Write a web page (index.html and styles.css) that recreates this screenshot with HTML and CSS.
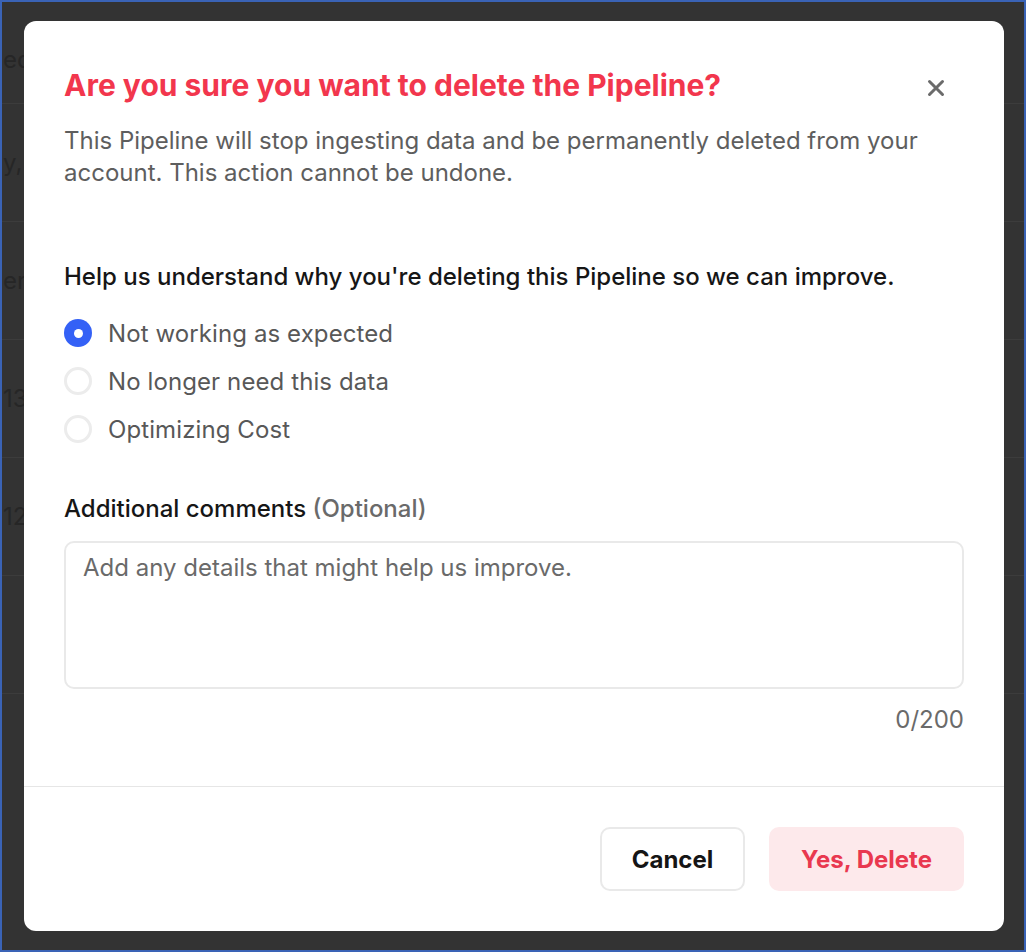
FILE: index.html
```html
<!DOCTYPE html>
<html lang="en">
<head>
<meta charset="utf-8">
<title>Delete Pipeline</title>
<link rel="stylesheet" href="styles.css">
</head>
<body>
<div class="page">
  <div class="row row-head"><span class="cell">ed</span></div>
  <div class="row"><span class="cell">y,</span></div>
  <div class="row"><span class="cell">ero</span></div>
  <div class="row"><span class="cell">13</span></div>
  <div class="row"><span class="cell">12</span></div>
  <div class="row"><span class="cell"></span></div>
</div>
<div class="overlay">
  <div class="modal" role="dialog">
    <div class="modal-body">
      <div class="modal-header">
        <h1 class="title">Are you sure you want to delete the Pipeline?</h1>
        <button class="close" aria-label="Close">
          <svg width="18" height="18" viewBox="0 0 18 18"><path d="M2.5 2.5 L15.5 15.5 M15.5 2.5 L2.5 15.5" stroke="#6b6b6b" stroke-width="3" stroke-linecap="round" fill="none"/></svg>
        </button>
      </div>
      <p class="desc">This Pipeline will stop ingesting data and be permanently deleted from your account. This action cannot be undone.</p>
      <p class="question">Help us understand why you're deleting this Pipeline so we can improve.</p>
      <div class="options">
        <label class="option"><span class="radio radio-on"></span><span class="opt-label">Not working as expected</span></label>
        <label class="option"><span class="radio"></span><span class="opt-label">No longer need this data</span></label>
        <label class="option"><span class="radio"></span><span class="opt-label">Optimizing Cost</span></label>
      </div>
      <div class="field-label">Additional comments <span class="muted">(Optional)</span></div>
      <div class="textarea"><span class="placeholder">Add any details that might help us improve.</span></div>
      <div class="counter">0/200</div>
    </div>
    <div class="modal-footer">
      <button class="btn btn-cancel">Cancel</button>
      <button class="btn btn-delete">Yes, Delete</button>
    </div>
  </div>
</div>
</body>
</html>
```

FILE: styles.css
```css
* { box-sizing: border-box; }
html, body { margin: 0; padding: 0; }
body {
  width: 1026px;
  height: 952px;
  overflow: hidden;
  background: #333333;
  font-family: Inter, "Noto Sans", sans-serif;
  position: relative;
}
.page {
  padding-top: 2px;
}
.row {
  height: 118px;
  border-bottom: 1px solid #3c3c3c;
  display: flex;
  align-items: center;
  overflow: hidden;
}
.row-head {
  height: 102px;
  padding-top: 14px;
}
.cell {
  font-size: 24px;
  color: #262626;
  margin-left: 3px;
  white-space: nowrap;
}
.overlay {
  position: absolute;
  inset: 0;
  border: 2px solid #3a63b6;
  padding: 19px 20px 19px 22px;
  display: flex;
}
.modal {
  width: 980px;
  height: 910px;
  background: #ffffff;
  border-radius: 12px;
  display: flex;
  flex-direction: column;
}
.modal-body {
  padding: 46px 40px 50px 40px;
  border-bottom: 1px solid #e6e6e6;
}
.modal-header {
  display: flex;
  align-items: flex-start;
  justify-content: space-between;
  height: 36px;
}
.title {
  margin: 0;
  font-size: 30px;
  line-height: 36px;
  font-weight: 700;
  color: #f2364d;
}
.close {
  width: 32px;
  height: 32px;
  margin-right: 12px;
  margin-top: 5px;
  border: none;
  background: none;
  padding: 0;
  display: flex;
  align-items: center;
  justify-content: center;
}
.desc {
  margin: 22px 0 0 0;
  font-size: 24px;
  line-height: 32px;
  color: #5e5e5e;
}
.question {
  margin: 72px 0 0 0;
  font-size: 24px;
  line-height: 32px;
  font-weight: 500;
  color: #161616;
}
.options {
  margin-top: 16px;
  display: flex;
  flex-direction: column;
}
.option {
  height: 48px;
  display: flex;
  align-items: center;
  gap: 16px;
}
.radio {
  width: 28px;
  height: 28px;
  border-radius: 50%;
  border: 3px solid #ececec;
  background: #fff;
  flex: none;
  display: flex;
  align-items: center;
  justify-content: center;
}
.radio-on {
  border: none;
  background: #3461f6;
}
.radio-on::after {
  content: "";
  width: 9px;
  height: 9px;
  border-radius: 50%;
  background: #fff;
}
.opt-label {
  font-size: 24px;
  color: #585858;
  letter-spacing: 0.1px;
}
.field-label {
  margin-top: 40px;
  font-size: 24px;
  line-height: 32px;
  font-weight: 500;
  color: #161616;
}
.muted { color: #6a6a6a; }
.textarea {
  margin-top: 16px;
  height: 148px;
  border: 2px solid #e9e9e9;
  border-radius: 10px;
  padding: 9px 17px;
}
.placeholder {
  font-size: 24px;
  line-height: 32px;
  color: #6a6a6a;
}
.counter {
  margin-top: 15px;
  text-align: right;
  font-size: 24px;
  line-height: 32px;
  color: #6a6a6a;
}
.modal-footer {
  flex: 1;
  display: flex;
  justify-content: flex-end;
  align-items: center;
  gap: 24px;
  padding: 0 40px;
}
.btn {
  height: 64px;
  border-radius: 10px;
  font-family: Inter, "Noto Sans", sans-serif;
  font-size: 24px;
  font-weight: 700;
  padding: 0;
}
.btn-cancel {
  width: 145px;
  background: #fff;
  border: 2px solid #e9e9e9;
  color: #151515;
}
.btn-delete {
  width: 195px;
  background: #fde9eb;
  border: none;
  color: #e9384f;
}
```
